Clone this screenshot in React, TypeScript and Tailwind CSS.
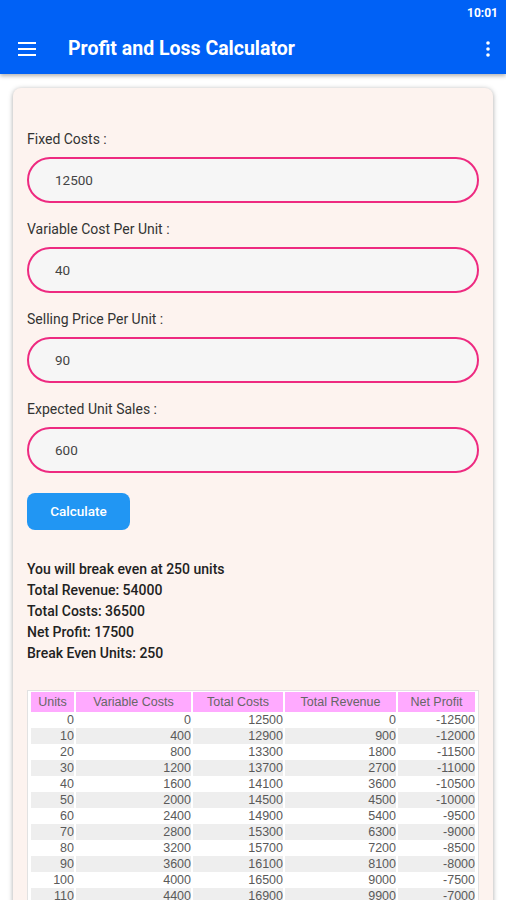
import { useState } from 'react';

const fields = [
  { label: 'Fixed Costs :', value: '12500' },
  { label: 'Variable Cost Per Unit :', value: '40' },
  { label: 'Selling Price Per Unit :', value: '90' },
  { label: 'Expected Unit Sales :', value: '600' },
];

const rows = Array.from({ length: 14 }, (_, i) => {
  const units = i * 10;
  return {
    units,
    variable: units * 40,
    total: 12500 + units * 40,
    revenue: units * 90,
    profit: units * 90 - (12500 + units * 40),
  };
});

export default function App() {
  const [values, setValues] = useState(fields.map((f) => f.value));

  return (
    <div className="h-[900px] overflow-hidden bg-white" style={{ fontFamily: 'Roboto, "Noto Sans", sans-serif' }}>
      {/* status bar + app bar */}
      <div className="bg-[#0061f6] shadow-[0_2px_4px_rgba(0,0,0,0.3)] relative z-10">
        <div className="h-[24px] flex items-center justify-end pr-[8px]">
          <span className="text-white text-[12px] font-bold pt-[2px]">10:01</span>
        </div>
        <div className="h-[50px] flex items-center pl-[18px] pr-[16px]">
          <svg width="18" height="14" viewBox="0 0 18 14" className="text-white">
            <rect x="0" y="0" width="18" height="2" fill="currentColor" />
            <rect x="0" y="6" width="18" height="2" fill="currentColor" />
            <rect x="0" y="12" width="18" height="2" fill="currentColor" />
          </svg>
          <h1 className="ml-[32px] text-white text-[19.5px] font-bold flex-1">Profit and Loss Calculator</h1>
          <svg width="4" height="16" viewBox="0 0 4 16" className="text-white">
            <circle cx="2" cy="2" r="1.8" fill="currentColor" />
            <circle cx="2" cy="8" r="1.8" fill="currentColor" />
            <circle cx="2" cy="14" r="1.8" fill="currentColor" />
          </svg>
        </div>
      </div>

      <div className="px-[13px] pt-[14px]">
        <div className="bg-[#fdf3ef] rounded-[8px] shadow-[0_1px_5px_rgba(0,0,0,0.35)] px-[14px] pt-[43px] pb-[20px]">
          <div className="flex flex-col gap-[18px]">
            {fields.map((f, i) => (
              <div key={f.label} className="flex flex-col gap-[10px]">
                <label className="text-[14px] text-[#333] leading-[16px]">{f.label}</label>
                <input
                  value={values[i]}
                  onChange={(e) => {
                    const next = [...values];
                    next[i] = e.target.value;
                    setValues(next);
                  }}
                  className="h-[46px] w-full rounded-full border-[2.5px] border-[#ee2a80] bg-[#f6f6f6] px-[26px] text-[13.5px] text-[#444] outline-none"
                />
              </div>
            ))}
          </div>

          <button className="mt-[20px] h-[37px] w-[103px] rounded-[8px] bg-[#2196f3] text-white text-[13.5px] font-medium">
            Calculate
          </button>

          <div className="mt-[29px] text-[14px] font-medium text-[#222] leading-[21px]">
            <p>You will break even at 250 units</p>
            <p>Total Revenue: 54000</p>
            <p>Total Costs: 36500</p>
            <p>Net Profit: 17500</p>
            <p>Break Even Units: 250</p>
          </div>

          <div className="mt-[26px] border border-[#e2e2e2] bg-white p-px" style={{ fontFamily: '"Liberation Sans", Arial, sans-serif' }}>
            <table className="w-full border-separate border-spacing-x-[2px] border-spacing-y-0 text-[12.5px] text-[#5a5a5a]">
              <thead>
                <tr>
                  <th className="w-[43px] h-[20px] bg-[#ffaaff] font-normal text-[#666]">Units</th>
                  <th className="w-[115px] bg-[#ffaaff] font-normal text-[#666]">Variable Costs</th>
                  <th className="w-[90px] bg-[#ffaaff] font-normal text-[#666]">Total Costs</th>
                  <th className="w-[111px] bg-[#ffaaff] font-normal text-[#666]">Total Revenue</th>
                  <th className="bg-[#ffaaff] font-normal text-[#666]">Net Profit</th>
                </tr>
              </thead>
              <tbody>
                {rows.map((r, i) => (
                  <tr key={r.units} className={i % 2 === 1 ? 'bg-[#eeeeee]' : 'bg-white'}>
                    <td className="h-[16px] text-right leading-[16px]">{r.units}</td>
                    <td className="text-right leading-[16px]">{r.variable}</td>
                    <td className="text-right leading-[16px]">{r.total}</td>
                    <td className="text-right leading-[16px]">{r.revenue}</td>
                    <td className="text-right leading-[16px]">{r.profit}</td>
                  </tr>
                ))}
              </tbody>
            </table>
          </div>
        </div>
      </div>
    </div>
  );
}
